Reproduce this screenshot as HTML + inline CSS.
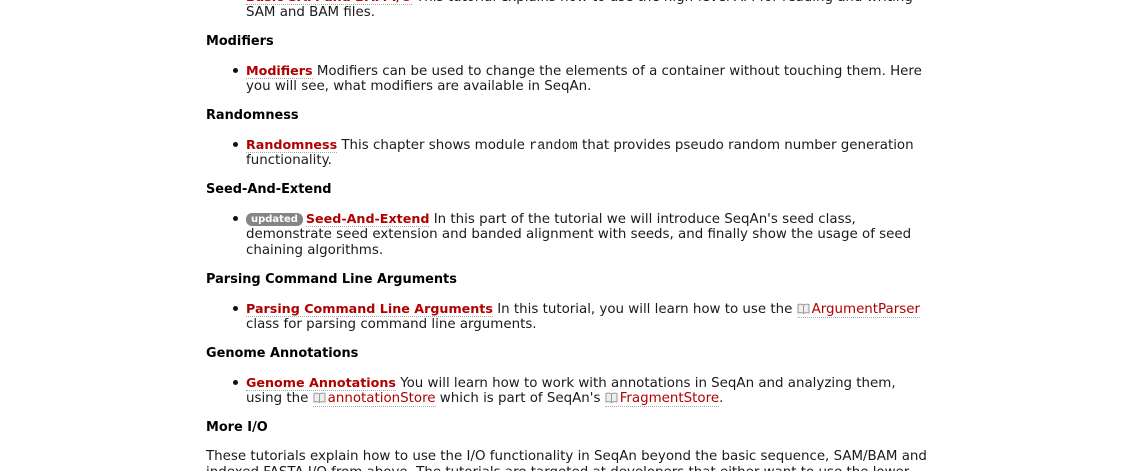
<!DOCTYPE html>
<html><head><meta charset="utf-8"><style>
html,body{margin:0;padding:0;background:#fff;width:1131px;height:471px;overflow:hidden;position:relative}
body{font-family:"DejaVu Sans",Verdana,sans-serif;font-size:13.4px;color:#1a1a1a}
.l{position:absolute;left:246px;height:16px;line-height:16px;white-space:nowrap}
.h{position:absolute;left:206px;font-weight:bold;font-size:12.9px;height:16px;line-height:16px;white-space:nowrap;color:#000}
.p{left:206px}
a{color:#b00000;text-decoration:none;border-bottom:1px dotted #aaa}
a.b{font-weight:bold;font-size:12.7px}
.dot{position:absolute;left:233px;width:5px;height:5px;border-radius:50%;background:#111}
code{font-family:"Liberation Mono",monospace;font-size:13.5px}
.bg{display:inline-block;background:#858585;color:#fff;font-weight:bold;font-size:10px;line-height:13px;padding:0 5px;border-radius:6px;vertical-align:1px;margin-right:3px}
svg.bk{vertical-align:-1px;margin-right:2px}
</style></head><body>
<div class="l" style="top:-11px"><a class="b" href="#">Basic SAM and BAM I/O</a> This tutorial explains how to use the high-level API for reading and writing</div>
<div class="l" style="top:5px">SAM and BAM files.</div>

<div class="h" style="top:34px">Modifiers</div>
<div class="dot" style="top:68px"></div>
<div class="l" style="top:63px"><a class="b" href="#">Modifiers</a> Modifiers can be used to change the elements of a container without touching them. Here</div>
<div class="l" style="top:79px">you will see, what modifiers are available in SeqAn.</div>

<div class="h" style="top:108px">Randomness</div>
<div class="dot" style="top:142px"></div>
<div class="l" style="top:137px"><a class="b" href="#">Randomness</a> This chapter shows module <code>random</code> that provides pseudo random number generation</div>
<div class="l" style="top:153px">functionality.</div>

<div class="h" style="top:182px">Seed-And-Extend</div>
<div class="dot" style="top:216px"></div>
<div class="l" style="top:211px"><span class="bg">updated</span><a class="b" href="#">Seed-And-Extend</a> In this part of the tutorial we will introduce SeqAn's seed class,</div>
<div class="l" style="top:227px">demonstrate seed extension and banded alignment with seeds, and finally show the usage of seed</div>
<div class="l" style="top:243px">chaining algorithms.</div>

<div class="h" style="top:272px">Parsing Command Line Arguments</div>
<div class="dot" style="top:306px"></div>
<div class="l" style="top:301px"><a class="b" href="#">Parsing Command Line Arguments</a> In this tutorial, you will learn how to use the <a href="#"><svg class="bk" width="13" height="11" viewBox="0 0 13 11"><path d="M6.5 2C5 1 3 1 1 1.5V10C3 9.5 5 9.5 6.5 10.5C8 9.5 10 9.5 12 10V1.5C10 1 8 1 6.5 2ZM6.5 2V10.5" fill="#eee" stroke="#999" stroke-width="1"/></svg>ArgumentParser</a></div>
<div class="l" style="top:317px">class for parsing command line arguments.</div>

<div class="h" style="top:346px">Genome Annotations</div>
<div class="dot" style="top:380px"></div>
<div class="l" style="top:375px"><a class="b" href="#">Genome Annotations</a> You will learn how to work with annotations in SeqAn and analyzing them,</div>
<div class="l" style="top:391px">using the <a href="#"><svg class="bk" width="13" height="11" viewBox="0 0 13 11"><path d="M6.5 2C5 1 3 1 1 1.5V10C3 9.5 5 9.5 6.5 10.5C8 9.5 10 9.5 12 10V1.5C10 1 8 1 6.5 2ZM6.5 2V10.5" fill="#eee" stroke="#999" stroke-width="1"/></svg>annotationStore</a> which is part of SeqAn's <a href="#"><svg class="bk" width="13" height="11" viewBox="0 0 13 11"><path d="M6.5 2C5 1 3 1 1 1.5V10C3 9.5 5 9.5 6.5 10.5C8 9.5 10 9.5 12 10V1.5C10 1 8 1 6.5 2ZM6.5 2V10.5" fill="#eee" stroke="#999" stroke-width="1"/></svg>FragmentStore</a>.</div>

<div class="h" style="top:420px">More I/O</div>
<div class="l p" style="top:449px">These tutorials explain how to use the I/O functionality in SeqAn beyond the basic sequence, SAM/BAM and</div>
<div class="l p" style="top:465px">indexed FASTA I/O from above. The tutorials are targeted at developers that either want to use the lower</div>
</body></html>
